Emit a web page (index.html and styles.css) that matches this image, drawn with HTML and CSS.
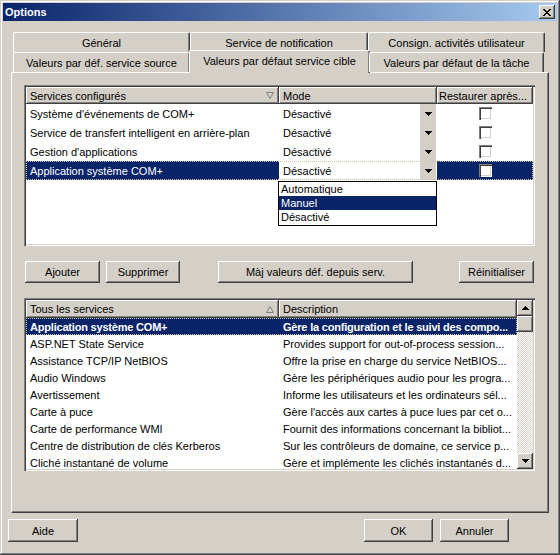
FILE: index.html
```html
<!DOCTYPE html>
<html lang="fr">
<head>
    <meta charset="UTF-8">
    <title>Options</title>
    <link rel="stylesheet" href="styles.css">
</head>
<body>
<div class="window">
    <div class="titlebar">
        <span class="title">Options</span>
        <span class="close">
            <svg width="8" height="7" viewBox="0 0 8 7"><path d="M0 0h2v1H0zM6 0h2v1H6zM1 1h2v1H1zM5 1h2v1H5zM2 2h4v1H2zM3 3h2v1H3zM2 4h4v1H2zM1 5h2v1H1zM5 5h2v1H5zM0 6h2v1H0zM6 6h2v1H6z" fill="#000"/></svg>
        </span>
    </div>

    <div class="main">
        <div class="tabs">
            <div class="tabrow">
                <div class="tab w177">Général</div>
                <div class="tab w178">Service de notification</div>
                <div class="tab w177">Consign. activités utilisateur</div>
            </div>
            <div class="tabrow">
                <div class="tab w177">Valeurs par déf. service source</div>
                <div class="tab active">Valeurs par défaut service cible</div>
                <div class="tab w175">Valeurs par défaut de la tâche</div>
            </div>
        </div>

        <div class="panel">
            <!-- services configurés -->
            <div class="listview lv-top">
                <div class="header">
                    <div class="hcell c1">Services configurés
                        <svg class="sort" width="8" height="7" viewBox="0 0 8 7"><path d="M0.5 0.5h7l-3.5 6z" fill="none" stroke="#808080"/></svg>
                    </div>
                    <div class="hcell c2">Mode</div>
                    <div class="hcell c3">Restaurer après...</div>
                </div>
                <div class="row">
                    <div class="cell c1">Système d'événements de COM+</div>
                    <div class="cell c2 combo"><span>Désactivé</span><span class="drop"><svg width="7" height="4" viewBox="0 0 7 4"><path d="M0 0h7v1H0zM1 1h5v1H1zM2 2h3v1H2zM3 3h1v1H3z"/></svg></span></div>
                    <div class="cell c3"><span class="check"></span></div>
                </div>
                <div class="row">
                    <div class="cell c1">Service de transfert intelligent en arrière-plan</div>
                    <div class="cell c2 combo"><span>Désactivé</span><span class="drop"><svg width="7" height="4" viewBox="0 0 7 4"><path d="M0 0h7v1H0zM1 1h5v1H1zM2 2h3v1H2zM3 3h1v1H3z"/></svg></span></div>
                    <div class="cell c3"><span class="check"></span></div>
                </div>
                <div class="row">
                    <div class="cell c1">Gestion d'applications</div>
                    <div class="cell c2 combo"><span>Désactivé</span><span class="drop"><svg width="7" height="4" viewBox="0 0 7 4"><path d="M0 0h7v1H0zM1 1h5v1H1zM2 2h3v1H2zM3 3h1v1H3z"/></svg></span></div>
                    <div class="cell c3"><span class="check"></span></div>
                </div>
                <div class="row selected">
                    <div class="cell c1">Application système COM+</div>
                    <div class="cell c2 combo"><span>Désactivé</span><span class="drop"><svg width="7" height="4" viewBox="0 0 7 4"><path d="M0 0h7v1H0zM1 1h5v1H1zM2 2h3v1H2zM3 3h1v1H3z"/></svg></span></div>
                    <div class="cell c3"><span class="check"></span></div>
                </div>

                <div class="dropdown">
                    <div class="item">Automatique</div>
                    <div class="item sel">Manuel</div>
                    <div class="item">Désactivé</div>
                </div>
            </div>

            <div class="buttons">
                <button class="btn b-add">Ajouter</button>
                <button class="btn b-del">Supprimer</button>
                <button class="btn b-maj">Màj valeurs déf. depuis serv.</button>
                <button class="btn b-reset">Réinitialiser</button>
            </div>

            <!-- tous les services -->
            <div class="listview lv-bottom">
                <div class="lv-main">
                    <div class="header">
                        <div class="hcell c1">Tous les services
                            <svg class="sort" width="8" height="7" viewBox="0 0 8 7"><path d="M0.5 6.5h7l-3.5 -6z" fill="none" stroke="#808080"/></svg>
                        </div>
                        <div class="hcell c2w">Description</div>
                    </div>
                    <div class="srow selected bold">
                        <div class="cell c1">Application système COM+</div>
                        <div class="cell c2w">Gère la configuration et le suivi des compo...</div>
                    </div>
                    <div class="srow">
                        <div class="cell c1">ASP.NET State Service</div>
                        <div class="cell c2w">Provides support for out-of-process session...</div>
                    </div>
                    <div class="srow">
                        <div class="cell c1">Assistance TCP/IP NetBIOS</div>
                        <div class="cell c2w">Offre la prise en charge du service NetBIOS...</div>
                    </div>
                    <div class="srow">
                        <div class="cell c1">Audio Windows</div>
                        <div class="cell c2w">Gère les périphériques audio pour les progra...</div>
                    </div>
                    <div class="srow">
                        <div class="cell c1">Avertissement</div>
                        <div class="cell c2w">Informe les utilisateurs et les ordinateurs sél...</div>
                    </div>
                    <div class="srow">
                        <div class="cell c1">Carte à puce</div>
                        <div class="cell c2w">Gère l'accès aux cartes à puce lues par cet o...</div>
                    </div>
                    <div class="srow">
                        <div class="cell c1">Carte de performance WMI</div>
                        <div class="cell c2w">Fournit des informations concernant la bibliot...</div>
                    </div>
                    <div class="srow">
                        <div class="cell c1">Centre de distribution de clés Kerberos</div>
                        <div class="cell c2w">Sur les contrôleurs de domaine, ce service p...</div>
                    </div>
                    <div class="srow">
                        <div class="cell c1">Cliché instantané de volume</div>
                        <div class="cell c2w">Gère et implémente les clichés instantanés d...</div>
                    </div>
                </div>
                <div class="scrollbar">
                    <span class="sbtn"><svg width="7" height="4" viewBox="0 0 7 4"><path d="M3 0h1v1H3zM2 1h3v1H2zM1 2h5v1H1zM0 3h7v1H0z"/></svg></span>
                    <span class="thumb"></span>
                    <span class="track"></span>
                    <span class="sbtn"><svg width="7" height="4" viewBox="0 0 7 4"><path d="M0 0h7v1H0zM1 1h5v1H1zM2 2h3v1H2zM3 3h1v1H3z"/></svg></span>
                </div>
            </div>
        </div>
    </div>

    <div class="footer">
        <button class="btn b-help">Aide</button>
        <div class="right">
            <button class="btn b-foot">OK</button>
            <button class="btn b-foot">Annuler</button>
        </div>
    </div>
</div>
</body>
</html>
```

FILE: styles.css
```css
*{
    box-sizing: border-box;
}
body{
    margin: 0;
    font-family: "Liberation Sans", Arial, sans-serif;
    font-size: 11px;
    color: #000;
}
.window{
    width: 560px;
    height: 555px;
    padding: 3px;
    background-color: #d4d0c8;
    box-shadow: inset -1px -1px #404040, inset 1px 1px #d4d0c8, inset -2px -2px #808080, inset 2px 2px #fff;
}
.titlebar{
    height: 18px;
    display: flex;
    align-items: center;
    justify-content: space-between;
    padding: 0 2px 0 2px;
    background: linear-gradient(to right, #0a246a, #a6caf0);
}
.title{
    color: white;
    font-weight: bold;
    font-size: 11px;
}
.close{
    width: 16px;
    height: 14px;
    display: flex;
    align-items: center;
    justify-content: center;
    background-color: #d4d0c8;
    box-shadow: inset -1px -1px #404040, inset 1px 1px #fff, inset -2px -2px #808080;
}

.main{
    padding: 11px 8px 0 8px;
}

/* tabs */
.tabs{
    margin-left: 2px;
    position: relative;
    z-index: 1;
}
.tabrow{
    display: flex;
    height: 20px;
}
.tab{
    height: 20px;
    display: flex;
    align-items: center;
    justify-content: center;
    border-top: 1px solid #fff;
    border-left: 1px solid #fff;
    border-right: 1px solid #404040;
    border-radius: 2px 2px 0 0;
    box-shadow: inset -1px 0 #808080;
    background-color: #d4d0c8;
    white-space: nowrap;
}
.w177{ width: 177px; }
.w178{ width: 178px; }
.w175{ width: 175px; }
.tab.active{
    width: 181px;
    height: 23px;
    margin-top: -2px;
    margin-left: -1px;
    margin-right: -1px;
    padding-bottom: 2px;
}

.panel{
    height: 441px;
    border: 1px solid;
    border-color: #fff #404040 #404040 #fff;
    box-shadow: inset -1px -1px #808080;
    padding: 12px 0 0 12px;
}

/* list views */
.listview{
    width: 511px;
    padding: 2px;
    background-color: white;
    box-shadow: inset 1px 1px #808080, inset 2px 2px #404040, inset -1px -1px #fff, inset -2px -2px #d4d0c8;
}
.lv-top{
    height: 161px;
    position: relative;
}
.header{
    display: flex;
    height: 17px;
}
.lv-bottom .header{
    height: 18px;
}
.hcell{
    display: flex;
    align-items: center;
    justify-content: space-between;
    padding: 0 4px 0 4px;
    background-color: #d4d0c8;
    box-shadow: inset -1px -1px #404040, inset 1px 1px #fff, inset -2px -2px #808080;
    white-space: nowrap;
}
.sort{
    margin-right: 1px;
}
.c1{ width: 253px; }
.c2{ width: 158px; }
.c3{ width: 96px; }
.c2w{ width: 238px; }

.row{
    display: flex;
    height: 19px;
}
.cell{
    display: flex;
    align-items: center;
    padding-left: 4px;
    white-space: nowrap;
    overflow: hidden;
}
.combo{
    justify-content: space-between;
    padding-right: 1px;
}
.drop{
    width: 16px;
    height: 19px;
    display: flex;
    align-items: center;
    justify-content: center;
    background-color: #d4d0c8;
}
.c3{
    justify-content: center;
    padding-left: 0;
}
.check{
    width: 13px;
    height: 13px;
    background-color: white;
    box-shadow: inset 1px 1px #808080, inset 2px 2px #404040, inset -1px -1px #fff, inset -2px -2px #d4d0c8;
}
.row.selected{
    outline: 1px dotted #c8c8a0;
    outline-offset: -1px;
}
.row.selected .c1,
.row.selected .c3{
    background-color: #0a246a;
    color: white;
}

.dropdown{
    position: absolute;
    top: 96px;
    left: 254px;
    width: 159px;
    height: 45px;
    border: 1px solid #000;
    background-color: white;
}
.item{
    height: 14px;
    line-height: 14px;
    padding-left: 2px;
}
.item.sel{
    background-color: #0a246a;
    color: white;
}

/* buttons */
.buttons{
    display: flex;
    margin: 15px 0 15px 1px;
    height: 22px;
}
.btn{
    height: 22px;
    border: none;
    padding: 0;
    font-family: "Liberation Sans", Arial, sans-serif;
    font-size: 11px;
    color: #000;
    background-color: #d4d0c8;
    box-shadow: inset -1px -1px #404040, inset 1px 1px #fff, inset -2px -2px #808080;
}
.b-add{ width: 75px; }
.b-del{ width: 74px; margin-left: 6px; }
.b-maj{ width: 195px; margin-left: 38px; }
.b-reset{ width: 75px; margin-left: 46px; }

.lv-bottom{
    height: 173px;
    display: flex;
}
.lv-main{
    width: 491px;
}
.srow{
    display: flex;
    height: 17px;
}
.srow.selected{
    background-color: #0a246a;
    color: white;
    outline: 1px dotted #c8c8a0;
    outline-offset: -1px;
}
.srow.bold{
    font-weight: bold;
    letter-spacing: -0.2px;
}
.scrollbar{
    width: 16px;
    display: flex;
    flex-direction: column;
}
.sbtn,
.thumb{
    height: 16px;
    display: flex;
    align-items: center;
    justify-content: center;
    background-color: #d4d0c8;
    box-shadow: inset -1px -1px #404040, inset 1px 1px #fff, inset -2px -2px #808080;
}
.track{
    flex: 1;
    background: repeating-conic-gradient(#fff 0 25%, #d4d0c8 0 50%) 0 0 / 2px 2px;
}

.footer{
    display: flex;
    justify-content: space-between;
    padding: 6px 48px 0 5px;
}
.right{
    display: flex;
    gap: 7px;
}
.b-help{
    width: 70px;
    height: 23px;
}
.b-foot{
    width: 69px;
    height: 23px;
}
```
